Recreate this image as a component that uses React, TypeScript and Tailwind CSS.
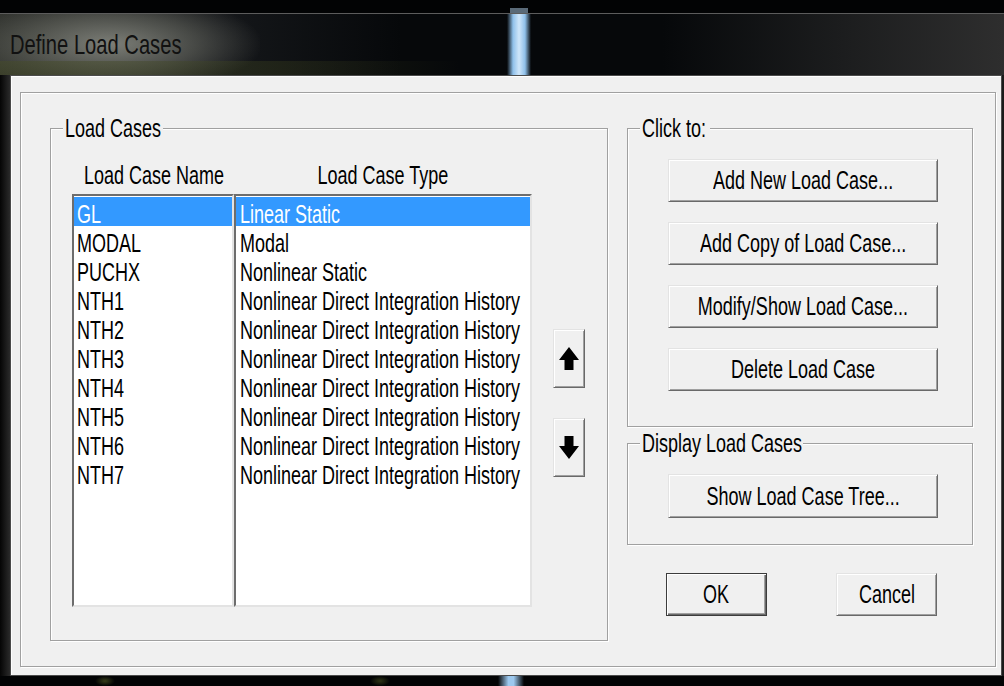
import React from "react";

// Windows-classic "Define Load Cases" dialog, drawn with a tall, condensed system font.

function T({ children, className = "" }: { children: React.ReactNode; className?: string }) {
  return <span className={`inline-block whitespace-nowrap scale-x-[0.72] ${className}`}>{children}</span>;
}

function Btn({ label, className = "", isDefault = false }: { label: string; className?: string; isDefault?: boolean }) {
  const edge = isDefault
    ? "border border-[#3c3c3c] shadow-[inset_1px_1px_0_#ffffff,inset_-1px_-1px_0_#696969,inset_-2px_-2px_0_#a0a0a0]"
    : "border border-t-[#e3e3e3] border-l-[#e3e3e3] border-r-[#696969] border-b-[#696969] shadow-[inset_1px_1px_0_#ffffff,inset_-1px_-1px_0_#a0a0a0]";
  return (
    <div className={`flex items-center justify-center bg-[#f0f0f0] leading-[29px] text-[25px] ${edge} ${className}`}>
      <T>{label}</T>
    </div>
  );
}

function Group({
  title,
  legendW,
  className = "",
  children,
}: {
  title: string;
  legendW: string;
  className?: string;
  children?: React.ReactNode;
}) {
  return (
    <div className={`relative border border-[#a0a0a0] shadow-[inset_1px_1px_0_#ffffff,1px_1px_0_#ffffff] ${className}`}>
      <div className={`absolute top-[-15px] left-[12px] h-[29px] bg-[#f0f0f0] pl-[2px] leading-[29px] text-[25px] ${legendW}`}>
        <T className="origin-left">{title}</T>
      </div>
      {children}
    </div>
  );
}

function Arrow({ down = false }: { down?: boolean }) {
  return (
    <svg width="20" height="23" viewBox="0 0 20 23" className={down ? "rotate-180" : ""}>
      <path d="M10 0 L20 13 L14.5 13 L14.5 23 L5.5 23 L5.5 13 L0 13 Z" fill="#000" />
    </svg>
  );
}

function ArrowBtn({ down = false, className = "" }: { down?: boolean; className?: string }) {
  return (
    <div
      className={`flex h-[59px] w-[32px] items-center justify-center bg-[#f0f0f0] border border-t-[#e3e3e3] border-l-[#e3e3e3] border-r-[#696969] border-b-[#696969] shadow-[inset_1px_1px_0_#ffffff,inset_-1px_-1px_0_#a0a0a0] ${className}`}
    >
      <Arrow down={down} />
    </div>
  );
}

const cases: [string, string][] = [
  ["GL", "Linear Static"],
  ["MODAL", "Modal"],
  ["PUCHX", "Nonlinear Static"],
  ["NTH1", "Nonlinear Direct Integration History"],
  ["NTH2", "Nonlinear Direct Integration History"],
  ["NTH3", "Nonlinear Direct Integration History"],
  ["NTH4", "Nonlinear Direct Integration History"],
  ["NTH5", "Nonlinear Direct Integration History"],
  ["NTH6", "Nonlinear Direct Integration History"],
  ["NTH7", "Nonlinear Direct Integration History"],
];

const listEdge =
  "h-[413px] overflow-hidden bg-white border-2 border-t-[#6d6d6d] border-l-[#6d6d6d] border-r-[#e3e3e3] border-b-[#e3e3e3] pt-[1px]";

function TitleBar() {
  return (
    <div className="relative h-[62px] overflow-hidden border-t border-[#5c5c5c] bg-[linear-gradient(90deg,#2c2e2a_0%,#15171a_22%,#06080a_40%,#06080a_66%,#1c1d1e_84%,#2e2e2e_100%)]">
      <div className="absolute left-[-40px] top-[-20px] h-[100px] w-[300px] bg-[radial-gradient(ellipse_at_center,rgba(140,142,134,0.85)_0%,rgba(110,112,104,0.55)_40%,rgba(60,62,56,0)_72%)]" />
      <div className="absolute bottom-0 left-0 h-[14px] w-[460px] bg-[linear-gradient(90deg,rgba(70,76,40,0.5),rgba(60,66,30,0.35)_60%,rgba(0,0,0,0))]" />
      <div className="absolute left-[507px] top-0 h-full w-[24px] bg-[linear-gradient(90deg,rgba(120,170,220,0)_0%,#8fc0ea_25%,#cfe6fa_50%,#8fc0ea_75%,rgba(120,170,220,0)_100%)]" />
      <div className="relative flex h-full items-center pl-[10px] text-[28px] leading-[30px] text-[#111111]">
        <T className="origin-left">Define Load Cases</T>
      </div>
    </div>
  );
}

export default function App() {
  return (
    <div className="flex h-[686px] w-[1004px] flex-col overflow-hidden bg-black font-['Liberation_Sans',Arial,sans-serif] text-black">
      <div className="relative h-[13px] bg-[#020304]">
        <div className="absolute left-[510px] top-[8px] h-[5px] w-[18px] bg-[#5a6a78]" />
      </div>
      <TitleBar />

      <div className="flex h-[601px]">
        <div className="w-[10px] bg-[linear-gradient(90deg,#050505,#2a2a2a)]" />

        {/* dialog client area */}
        <div className="h-[601px] w-[992px] border border-[#4b4b4b] bg-[#f0f0f0] pb-[8px] pl-[9px] pr-[5px] pt-[16px] shadow-[inset_1px_1px_0_#ffffff]">
          <div className="flex h-full w-full gap-[19px] border border-[#a0a0a0] pl-[29px] pt-[35px] shadow-[inset_1px_1px_0_#ffffff,1px_1px_0_#ffffff]">
            {/* Load Cases */}
            <Group title="Load Cases" legendW="w-[100px]" className="flex h-[513px] w-[558px] pl-[21px] pt-[32px]">
              <div className="flex w-[460px] flex-col">
                <div className="flex h-[29px] text-[25px] leading-[29px]">
                  <div className="w-[162px] pl-[12px]">
                    <T className="origin-left">Load Case Name</T>
                  </div>
                  <div className="w-[298px] text-center">
                    <T>Load Case Type</T>
                  </div>
                </div>
                <div className="mt-[4px] flex text-[25px]">
                  <div className={`w-[162px] ${listEdge}`}>
                    {cases.map(([name], i) => (
                      <div
                        key={name}
                        className={`h-[29px] pl-[3px] leading-[35px] ${i === 0 ? "bg-[#3399ff] text-white" : ""}`}
                      >
                        <T className="origin-left">{name}</T>
                      </div>
                    ))}
                  </div>
                  <div className={`w-[298px] ${listEdge}`}>
                    {cases.map(([name, type], i) => (
                      <div
                        key={name}
                        className={`h-[29px] pl-[4px] leading-[35px] ${i === 0 ? "bg-[#3399ff] text-white" : ""}`}
                      >
                        <T className="origin-left">{type}</T>
                      </div>
                    ))}
                  </div>
                </div>
              </div>
              <div className="ml-[21px] flex flex-col pt-[168px]">
                <ArrowBtn />
                <ArrowBtn down className="mt-[30px]" />
              </div>
            </Group>

            {/* right column */}
            <div className="flex w-[346px] flex-col">
              <Group title="Click to:" legendW="w-[70px]" className="flex h-[299px] flex-col gap-[20px] pl-[40px] pt-[30px]">
                <Btn label="Add New Load Case..." className="h-[43px] w-[270px]" />
                <Btn label="Add Copy of Load Case..." className="h-[43px] w-[270px]" />
                <Btn label="Modify/Show Load Case..." className="h-[43px] w-[270px]" />
                <Btn label="Delete Load Case" className="h-[43px] w-[270px]" />
              </Group>
              <Group title="Display Load Cases" legendW="w-[163px]" className="mt-[16px] h-[102px] pl-[40px] pt-[30px]">
                <Btn label="Show Load Case Tree..." className="h-[44px] w-[270px]" />
              </Group>
              <div className="mt-[28px] flex">
                <Btn label="OK" isDefault className="ml-[39px] h-[43px] w-[101px]" />
                <Btn label="Cancel" className="ml-[69px] h-[43px] w-[101px]" />
              </div>
            </div>
          </div>
        </div>

        <div className="w-[2px] bg-[#1a1a1a]" />
      </div>

      <div className="relative h-[10px] bg-[#020304]">
        <div className="absolute left-[498px] top-0 h-full w-[26px] bg-[linear-gradient(90deg,rgba(120,170,220,0),#9cc8ee_40%,#9cc8ee_60%,rgba(120,170,220,0))]" />
        <div className="absolute left-[95px] top-0 h-full w-[20px] bg-[radial-gradient(ellipse_at_center,rgba(90,100,40,0.6),rgba(0,0,0,0)_70%)]" />
        <div className="absolute left-[370px] top-0 h-full w-[20px] bg-[radial-gradient(ellipse_at_center,rgba(90,100,40,0.5),rgba(0,0,0,0)_70%)]" />
      </div>
    </div>
  );
}
